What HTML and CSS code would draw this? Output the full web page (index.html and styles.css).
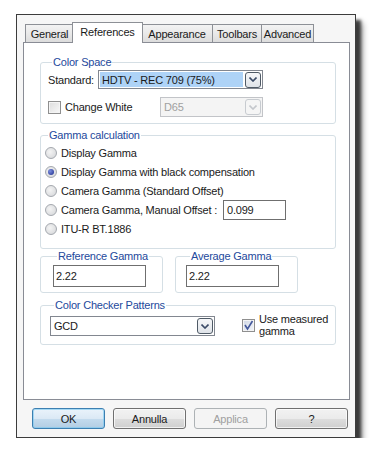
FILE: index.html
```html
<!DOCTYPE html>
<html>
<head>
<meta charset="utf-8">
<link rel="stylesheet" href="styles.css">
</head>
<body>
<div class="window">
  <div class="tabs">
    <div class="tab tab-general">General</div>
    <div class="tab active tab-ref">References</div>
    <div class="tab tab-app">Appearance</div>
    <div class="tab tab-tool">Toolbars</div>
    <div class="tab tab-adv">Advanced</div>
  </div>
  <div class="panel">
    <fieldset class="group group-cs">
      <legend>Color Space</legend>
      <div class="row">
        <span class="lbl-std">Standard:</span>
        <div class="combo combo-std">
          <span class="combo-text selected">HDTV - REC 709 (75%)</span>
          <span class="arrow"><svg width="8" height="5" viewBox="0 0 8 5"><path d="M0.5 0.5 L4 4 L7.5 0.5" fill="none" stroke="#3a4a66" stroke-width="1.6"/></svg></span>
        </div>
      </div>
      <div class="row row-white">
        <label class="check check-white"><span class="box"></span>Change White</label>
        <div class="combo combo-d65 disabled">
          <span class="combo-text">D65</span>
          <span class="arrow"><svg width="8" height="5" viewBox="0 0 8 5"><path d="M0.5 0.5 L4 4 L7.5 0.5" fill="none" stroke="#c4c7cc" stroke-width="1.6"/></svg></span>
        </div>
      </div>
    </fieldset>

    <fieldset class="group group-gamma">
      <legend>Gamma calculation</legend>
      <div class="radio"><span class="dot"></span>Display Gamma</div>
      <div class="radio on"><span class="dot"></span>Display Gamma with black compensation</div>
      <div class="radio"><span class="dot"></span>Camera Gamma (Standard Offset)</div>
      <div class="radio"><span class="dot"></span>Camera Gamma, Manual Offset :<span class="input input-offset">0.099</span></div>
      <div class="radio"><span class="dot"></span>ITU-R BT.1886</div>
    </fieldset>

    <div class="pair">
      <fieldset class="group group-small">
        <legend>Reference Gamma</legend>
        <span class="input input-gamma">2.22</span>
      </fieldset>
      <fieldset class="group group-small">
        <legend>Average Gamma</legend>
        <span class="input input-gamma">2.22</span>
      </fieldset>
    </div>

    <fieldset class="group group-cc">
      <legend>Color Checker Patterns</legend>
      <div class="row row-cc">
        <div class="combo combo-gcd">
          <span class="combo-text">GCD</span>
          <span class="arrow"><svg width="8" height="5" viewBox="0 0 8 5"><path d="M0.5 0.5 L4 4 L7.5 0.5" fill="none" stroke="#3a4a66" stroke-width="1.6"/></svg></span>
        </div>
        <label class="check check-measured"><span class="box checked"><svg width="11" height="11" viewBox="0 0 11 11"><path d="M2 5 L4.5 9 L9.5 1" fill="none" stroke="#44589a" stroke-width="1.6"/></svg></span><span class="two-lines">Use measured<br>gamma</span></label>
      </div>
    </fieldset>
  </div>
  <div class="buttons">
    <button class="btn default">OK</button>
    <button class="btn">Annulla</button>
    <button class="btn disabled">Applica</button>
    <button class="btn">?</button>
  </div>
</div>
</body>
</html>
```

FILE: styles.css
```css
* { box-sizing: border-box; }
html, body { margin: 0; padding: 0; background: #ffffff; }
body {
  font-family: "Liberation Sans", Arial, sans-serif;
  font-size: 11px;
  letter-spacing: -0.2px;
  color: #1a1a1a;
}

.window {
  margin: 14px 0 0 16px;
  width: 340px;
  height: 424px;
  border: 1px solid #3c3c3c;
  background: #f6f6f6;
  padding: 7px 4px 0 6px;
  box-shadow: 5px 6px 3px rgba(30, 30, 30, 0.8), 7px 9px 6px rgba(0,0,0,0.35);
}

/* tabs */
.tabs {
  display: flex;
  align-items: flex-end;
  height: 20px;
  padding-left: 2px;
  position: relative;
  z-index: 2;
}
.tab {
  height: 18px;
  border: 1px solid #8d9096;
  border-bottom: none;
  background: linear-gradient(#f3f3f3, #e9e9e9 50%, #dcdcdc);
  display: flex;
  align-items: center;
  justify-content: center;
  margin-right: -1px;
}
.tab-general { width: 49px; }
.tab-ref { width: 71px; }
.tab-app { width: 72px; }
.tab-tool { width: 50px; }
.tab-adv { width: 53px; }
.tab.active {
  height: 21px;
  background: #fff;
  margin-bottom: -1px;
  margin-left: -1px;
  margin-right: -2px;
  padding-bottom: 2px;
  position: relative;
  z-index: 3;
}

.panel {
  width: 327px;
  height: 358px;
  border: 1px solid #898c95;
  background: #fff;
  padding: 12px 13px 0 16px;
  position: relative;
  z-index: 1;
}

/* group boxes */
.group {
  margin: 0;
  border: 1px solid #d5dfe5;
  border-radius: 3px;
  min-width: 0;
}
.group legend {
  color: #24499c;
  padding: 0 1px;
  margin-left: 4px;
  line-height: 14px;
}

.group-cs { padding: 1px 6px 6px 7px; }
.row { display: flex; align-items: center; }
.row-white { margin-top: 8px; }
.lbl-std { width: 50px; }

.combo {
  height: 19px;
  border: 1px solid #828790;
  background: #fff;
  display: flex;
  align-items: center;
  padding: 1px;
}
.combo-std { width: 165px; }
.combo-d65 { width: 103px; height: 20px; }
.combo-gcd { width: 165px; height: 20px; }
.combo-text {
  flex: 1;
  height: 100%;
  display: flex;
  align-items: center;
  padding-left: 2px;
}
.combo-text.selected { background: #aed3f7; margin-right: 2px; }
.arrow {
  width: 16px;
  height: 16px;
  border: 1px solid #4f5a66;
  border-radius: 3px;
  background: linear-gradient(#f6f7f9, #dfe3e8);
  display: flex;
  align-items: center;
  justify-content: center;
}
.combo.disabled { border-color: #c2c4c8; background: #f4f4f4; }
.combo.disabled .combo-text { color: #a0a0a0; padding-left: 2px; }
.combo.disabled .arrow { border-color: #c7cbd0; background: #f5f5f5; }

.check { display: flex; align-items: center; }
.check-white { width: 112px; }
.box {
  width: 13px;
  height: 13px;
  border: 1px solid #8f8f8f;
  background: linear-gradient(135deg, #dcdcdc, #f8f8f8);
  margin-right: 4px;
  display: flex;
  align-items: center;
  justify-content: center;
  box-shadow: inset 0 0 0 1px #f4f4f4;
}
.box.checked { background: linear-gradient(135deg, #d0d7e4, #f2f5fa); }

/* gamma group */
.group-gamma { margin-top: 4px; padding: 1px 6px 10px 3px; }
.radio {
  display: flex;
  align-items: center;
  height: 19px;
}
.dot {
  width: 12px;
  height: 12px;
  border-radius: 50%;
  border: 1px solid #a4a8ae;
  background: radial-gradient(circle at 40% 40%, #f4f4f4, #d2d4d7);
  margin-right: 4px;
  margin-left: 1px;
  position: relative;
}
.radio.on .dot::after {
  content: "";
  position: absolute;
  left: 2px; top: 2px;
  width: 6px; height: 6px;
  border-radius: 50%;
  background: radial-gradient(circle at 35% 35%, #7c8fe0, #1b2a8a);
}
.input {
  display: inline-flex;
  align-items: center;
  border: 1px solid #6f6f6f;
  background: #fff;
  padding-left: 3px;
}
.input-offset { width: 63px; height: 20px; margin-left: 6px; }

/* pair */
.pair { display: flex; gap: 12px; margin-top: 0; }
.group-small { width: 123px; padding: 2px 5px 5px 12px; }
.group-small + .group-small { padding-left: 10px; }
.input-gamma { width: 93px; height: 22px; padding-left: 2px; }

/* color checker */
.group-cc { margin-top: 5px; padding: 3px 6px 7px 9px; }
.row-cc { align-items: center; }
.check-measured { margin-left: 27px; align-items: center; margin-top: -2px; }
.two-lines { line-height: 12px; }
.check-measured .box { margin-right: 4px; }

/* buttons */
.buttons {
  display: flex;
  gap: 8px;
  padding-left: 9px;
  margin-top: 8px;
}
.btn {
  width: 73px;
  height: 21px;
  font-family: "Liberation Sans", Arial, sans-serif;
  font-size: 11px;
  letter-spacing: -0.2px;
  color: #1a1a1a;
  border: 1px solid #707070;
  border-radius: 3px;
  background: linear-gradient(#f2f2f2, #ebebeb 50%, #dddddd 51%, #cfcfcf);
  box-shadow: inset 0 0 0 1px rgba(255,255,255,0.7);
  padding: 0;
}
.btn.default {
  border-color: #3c7fb1;
  background: linear-gradient(#eaf3fb, #dbe9f5 50%, #c4dbee 51%, #b3cde3);
  box-shadow: inset 0 0 0 1px rgba(120, 200, 240, 0.6);
}
.btn.disabled {
  border-color: #adb2b5;
  background: #f4f4f4;
  color: #a0a0a0;
  box-shadow: none;
}
```
